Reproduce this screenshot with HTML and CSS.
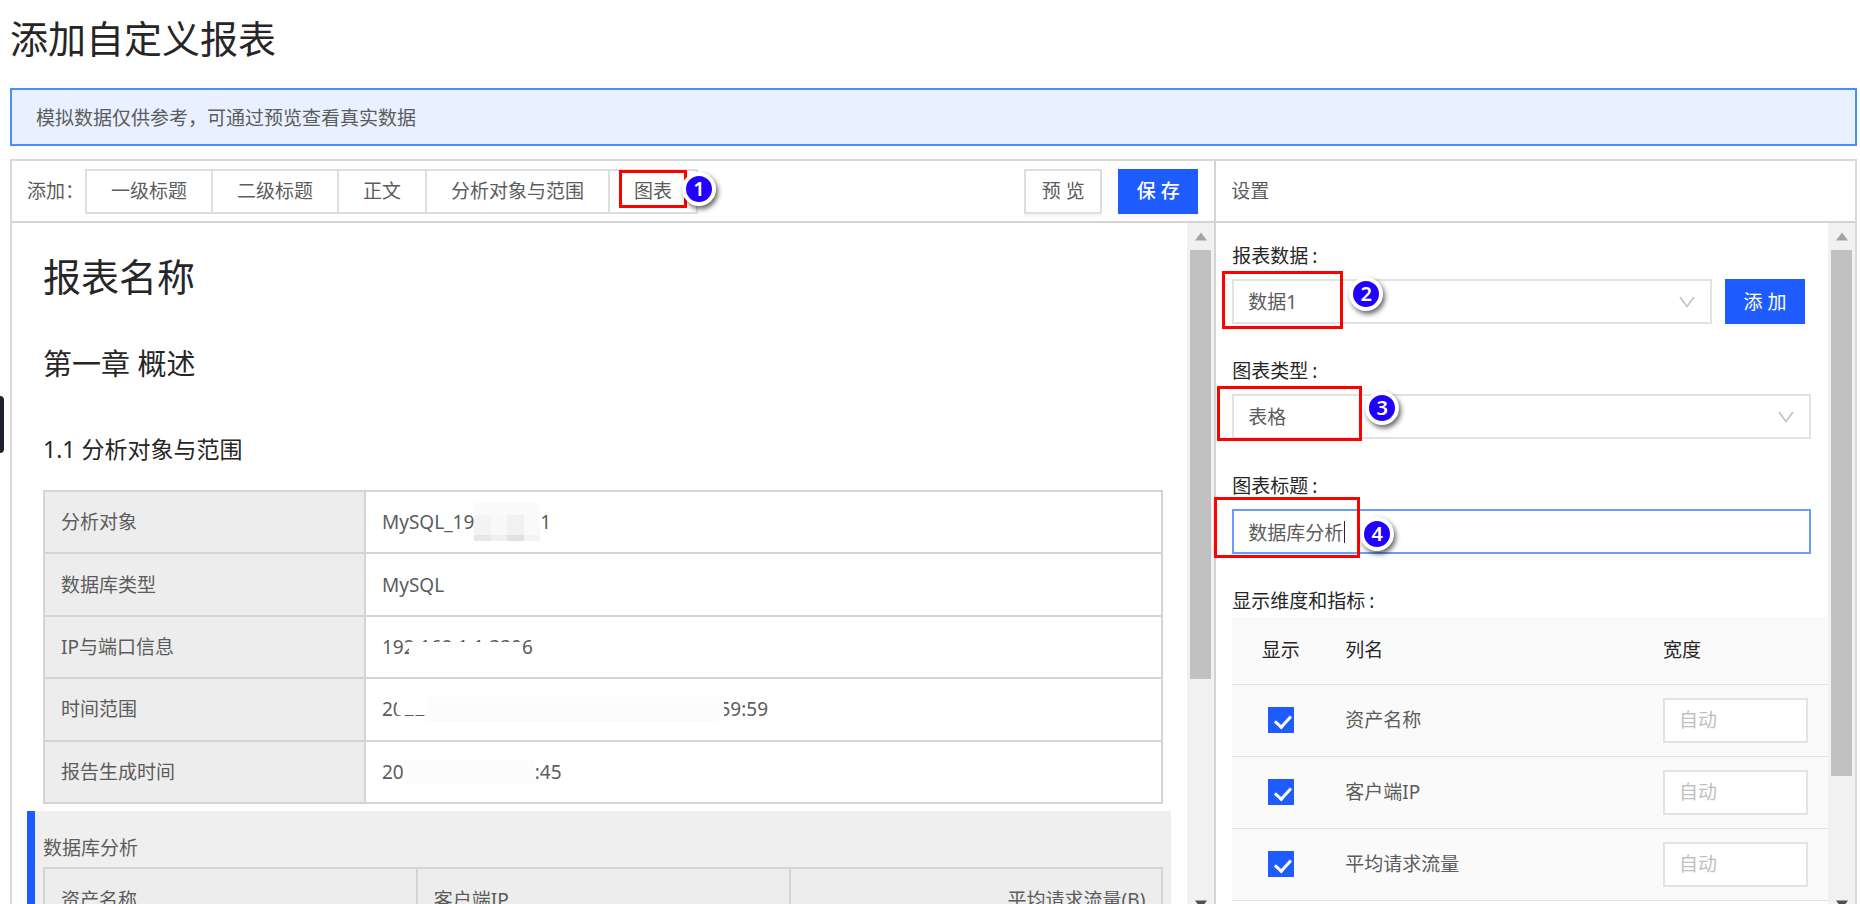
FILE: index.html
```html
<!DOCTYPE html>
<html lang="zh-CN">
<head>
<meta charset="utf-8">
<title>添加自定义报表</title>
<link rel="stylesheet" href="styles.css">
</head>
<body>
<span class="side-handle"></span>
<main class="page">
  <h1 class="page-title">添加自定义报表</h1>
  <div class="alert">模拟数据仅供参考，可通过预览查看真实数据</div>

  <div class="workspace">
    <section class="editor">
      <header class="bar">
        <span>添加：</span>
        <div class="btn-group">
          <button class="btn">一级标题</button>
          <button class="btn">二级标题</button>
          <button class="btn">正文</button>
          <button class="btn">分析对象与范围</button>
          <span class="anchor">
            <button class="btn">图表</button>
            <span class="mark mark-chart"></span>
            <span class="badge badge-chart">1</span>
          </span>
        </div>
        <div class="actions">
          <button class="btn btn-preview">预 览</button>
          <button class="btn btn-primary btn-save">保 存</button>
        </div>
      </header>
      <div class="pane">
        <article class="doc">
          <div class="doc-section">
            <h2 class="doc-title">报表名称</h2>
            <h3 class="doc-chapter">第一章 概述</h3>
            <h4 class="doc-heading">1.1 分析对象与范围</h4>
            <table class="info">
              <tr><th>分析对象</th><td><div class="value"><span>MySQL_19</span><span class="mosaic"><i></i><i></i><i></i><i></i></span><span>1</span></div></td></tr>
              <tr><th>数据库类型</th><td><div class="value">MySQL</div></td></tr>
              <tr><th>IP与端口信息</th><td><div class="value"><span class="anchor">192.168.1.1:3306<span class="cover cover-ip"></span></span></div></td></tr>
              <tr><th>时间范围</th><td><div class="value"><span class="anchor">2022<span class="cover cover-year"></span></span><span class="blank blank-range"></span><span class="anchor">59:59<span class="cover cover-digit"></span></span></div></td></tr>
              <tr><th>报告生成时间</th><td><div class="value"><span>20</span><span class="blank blank-time"></span><span>:45</span></div></td></tr>
            </table>
          </div>
          <div class="doc-selected">
            <p class="chart-name">数据库分析</p>
            <table class="chart">
              <tr><th>资产名称</th><th>客户端IP</th><th class="num">平均请求流量(B)</th></tr>
            </table>
          </div>
        </article>
        <div class="scroll">
          <svg class="arrow" viewBox="0 0 12 8"><path d="M6 0L12 8H0z" fill="#a3a3a3"/></svg>
          <div class="track"><div class="thumb thumb-doc"></div></div>
          <svg class="arrow" viewBox="0 0 12 8"><path d="M0 0H12L6 8z" fill="#505050"/></svg>
        </div>
      </div>
    </section>

    <section class="settings">
      <header class="bar">设置</header>
      <div class="pane">
        <form class="form">
          <div class="item">
            <label class="label" for="data">报表数据<span class="colon">:</span></label>
            <div class="row">
              <div class="select">
                <select class="control" id="data"><option>数据1</option></select>
                <svg class="chevron" viewBox="0 0 16 12"><path d="M1 1L8 10.500L15 1" fill="none" stroke="#bfbfbf" stroke-width="1.500"/></svg>
                <span class="mark mark-data"></span>
                <span class="badge badge-data">2</span>
              </div>
              <button type="button" class="btn btn-primary">添 加</button>
            </div>
          </div>
          <div class="item">
            <label class="label" for="type">图表类型<span class="colon">:</span></label>
            <div class="select">
              <select class="control" id="type"><option>表格</option></select>
              <svg class="chevron" viewBox="0 0 16 12"><path d="M1 1L8 10.500L15 1" fill="none" stroke="#bfbfbf" stroke-width="1.500"/></svg>
              <span class="mark mark-type"></span>
              <span class="badge badge-type">3</span>
            </div>
          </div>
          <div class="item">
            <label class="label" for="title">图表标题<span class="colon">:</span></label>
            <div class="select">
              <input class="control control-active" id="title" type="text" value="数据库分析">
              <span class="caret"></span>
              <span class="mark mark-title"></span>
              <span class="badge badge-title">4</span>
            </div>
          </div>
          <div class="label">显示维度和指标<span class="colon">:</span></div>
          <table class="fields">
            <tr><th class="show">显示</th><th>列名</th><th class="width">宽度</th></tr>
            <tr>
              <td class="show"><input class="check" type="checkbox" id="f1" checked></td>
              <td><label for="f1">资产名称</label></td>
              <td class="width"><input class="control" type="text" placeholder="自动" aria-label="资产名称宽度"></td>
            </tr>
            <tr>
              <td class="show"><input class="check" type="checkbox" id="f2" checked></td>
              <td><label for="f2">客户端IP</label></td>
              <td class="width"><input class="control" type="text" placeholder="自动" aria-label="客户端IP宽度"></td>
            </tr>
            <tr>
              <td class="show"><input class="check" type="checkbox" id="f3" checked></td>
              <td><label for="f3">平均请求流量</label></td>
              <td class="width"><input class="control" type="text" placeholder="自动" aria-label="平均请求流量宽度"></td>
            </tr>
          </table>
        </form>
        <div class="scroll">
          <svg class="arrow" viewBox="0 0 12 8"><path d="M6 0L12 8H0z" fill="#a3a3a3"/></svg>
          <div class="track"><div class="thumb thumb-form"></div></div>
          <svg class="arrow" viewBox="0 0 12 8"><path d="M0 0H12L6 8z" fill="#505050"/></svg>
        </div>
      </div>
    </section>
  </div>
</main>
</body>
</html>
```

FILE: styles.css
```css
* { box-sizing: border-box; }

body {
  margin: 0;
  height: 100vh;
  overflow: hidden;
  background: #fff;
  color: #5c5c5c;
  font: 19px/28px "Noto Sans", "Noto Sans CJK SC", sans-serif;
}

h1, h2, h3, h4, p { margin: 0; font-weight: 400; }
button, input, select { font: inherit; color: inherit; }
table { width: 100%; border-collapse: collapse; table-layout: fixed; }
th { font-weight: 400; text-align: left; }

.page {
  display: flex;
  flex-direction: column;
  height: 100vh;
  padding: 0 3px 0 10px;
}

.side-handle {
  position: absolute;
  left: 0;
  top: 396px;
  width: 4px;
  height: 57px;
  border-radius: 0 4px 4px 0;
  background: #1f232e;
}

.page-title {
  padding: 14px 0 26px;
  color: #262626;
  font-size: 38px;
  line-height: 48px;
}

.alert {
  margin-bottom: 13px;
  padding: 14px 24px 12px;
  border: 2px solid #4a8dfd;
  background: #e9f0ff;
}

.workspace {
  flex: 1;
  min-height: 0;
  display: grid;
  grid-template-columns: 1203fr 641fr;
  grid-template-rows: minmax(0, 1fr);
  margin-bottom: -16px;
  border: 2px solid #d9d9d9;
}

.editor, .settings {
  display: flex;
  flex-direction: column;
  min-width: 0;
}
.settings { border-left: 2px solid #d4d4d4; }

.bar {
  display: flex;
  align-items: center;
  height: 62px;
  flex: none;
  padding: 0 16px 0 15px;
  border-bottom: 2px solid #d4d4d4;
}

.btn-group { display: flex; margin-left: 1px; }
.btn-group .btn + .btn, .btn-group .anchor { margin-left: -2px; }

.btn {
  height: 45px;
  padding: 0 24px;
  border: 2px solid #dedede;
  background: #fff;
  line-height: 28px;
  white-space: nowrap;
}
.btn-preview, .btn-primary { padding: 0; width: 80px; box-shadow: 0 3px 0 #f7f7f7; }
.btn-preview { width: 78px; }
.btn-primary { border-color: #1f5cff; background: #1f5cff; color: #fff; }
.btn-save { font-weight: 500; }
.actions { display: flex; gap: 16px; margin-left: auto; }

.pane { flex: 1; min-height: 0; display: flex; }

.scroll {
  flex: none;
  width: 27px;
  display: flex;
  flex-direction: column;
  background: #f1f1f1;
}
.arrow { flex: none; width: 12px; height: 27px; margin: 0 auto; }
.track { flex: 1; padding: 0 3px; }
.thumb { background: #c1c1c1; }
.thumb-doc { height: 67%; }
.thumb-form { height: 82%; }

.doc { flex: 1; min-width: 0; overflow: hidden; padding: 30px 16px 0 15px; }
.doc-section { padding: 0 8px 0 16px; }
.doc-title { color: #262626; font-size: 38px; line-height: 46px; }
.doc-chapter { margin-top: 47px; color: #262626; font-size: 29px; line-height: 36px; }
.doc-heading { margin: 53px 0 27px; color: #262626; font-size: 23px; line-height: 28px; }

.info { height: 314px; }
.info th, .info td, .chart th { border: 2px solid #d4d4d4; padding: 0 16px; }
.info th, .info td { height: 62px; }
.info th { width: 321px; background: #ededed; }
.chart th { height: 63px; background: #ededed; }
.chart .num { text-align: right; }

.doc-selected {
  margin-top: 7px;
  padding: 23px 8px 24px;
  border-left: 8px solid #1f5cff;
  background: #efefef;
}
.chart-name { margin-bottom: 5px; }

.value { display: flex; align-items: center; height: 38px; }
.anchor { position: relative; }
.mosaic {
  align-self: stretch;
  display: flex;
  align-items: flex-end;
  width: 66px;
  background: #fafafa;
}
.mosaic i { flex: 1; height: 26px; background: #f4f4f4; border-bottom: 6px solid #e6e6e6; }
.mosaic i:nth-child(2) { background: #f8f8f8; border-color: #efefec; }
.mosaic i:nth-child(3) { background: #f1f1f2; border-color: #e0e1e3; }
.mosaic i:nth-child(4) { background: #fafafa; border-color: #f4f4f5; }

.cover { position: absolute; background: #fefefe; }
.cover-ip { left: 27px; right: 11px; top: 9px; bottom: 0; }
.cover-year { left: 15px; right: -2px; top: 0; height: 20px; }
.cover-digit { left: 0; top: 0; width: 5px; bottom: 0; }
.blank { height: 25px; background: #fcfcfc; }
.blank-range { width: 294px; }
.blank-time { width: 131px; }

.form { flex: 1; min-width: 0; padding: 19px 0 0 16px; }
.item { margin: 0 17px 33px 0; }
.label { display: block; color: #262626; }
.colon { margin-left: 4px; }
.item .label { margin-bottom: 9px; }
.row { display: flex; gap: 13px; margin-right: 6px; }
.select { position: relative; flex: 1; }

.control {
  display: block;
  width: 100%;
  height: 45px;
  padding: 0 14px;
  border: 2px solid #e2e2e2;
  border-radius: 0;
  outline: none;
  background: #fff;
  appearance: none;
}
.control::placeholder { color: #bfbfbf; opacity: 1; }
.control-active { border-color: #6c9dfc; }
.chevron { position: absolute; right: 17px; top: 17px; width: 16px; height: 12px; }
.caret { position: absolute; left: 112px; top: 12px; width: 1px; height: 22px; background: #262626; }

.fields { margin-top: 2px; background: #fafafa; }
.fields th { height: 67px; color: #262626; }
.fields td { height: 72px; }
.fields th, .fields td { padding: 0 16px; border-bottom: 1px solid #e2e2e2; }
.fields .show { width: 97px; padding: 0; text-align: center; }
.fields .width { width: 181px; padding-right: 20px; }

.check {
  display: block;
  width: 26px;
  height: 26px;
  margin: 0 auto;
  appearance: none;
  background: #1f5cff;
  position: relative;
}
.check::after {
  content: "";
  position: absolute;
  left: 10px;
  top: 5px;
  width: 7px;
  height: 13px;
  border: solid #fff;
  border-width: 0 3px 3px 0;
  transform: rotate(42deg);
}

.mark { position: absolute; border: 3px solid #f00; pointer-events: none; }
.mark-chart { left: 11px; top: 1px; width: 68px; height: 38px; }
.mark-data { left: -10px; top: -8px; width: 121px; height: 58px; }
.mark-type { left: -15px; top: -8px; width: 145px; height: 55px; }
.mark-title { left: -18px; top: -12px; width: 146px; height: 61px; }

.badge {
  position: absolute;
  width: 34px;
  height: 34px;
  border: 4px solid #fff;
  border-radius: 50%;
  background: #20f;
  box-shadow: 2px 3px 5px #0009;
  color: #fff;
  font-size: 20px;
  font-weight: 600;
  line-height: 26px;
  text-align: center;
}
.badge-chart { left: 74px; top: 3px; }
.badge-data { left: 117px; top: -2px; }
.badge-type { left: 133px; top: -3px; }
.badge-title { left: 128px; top: 8px; }
```
